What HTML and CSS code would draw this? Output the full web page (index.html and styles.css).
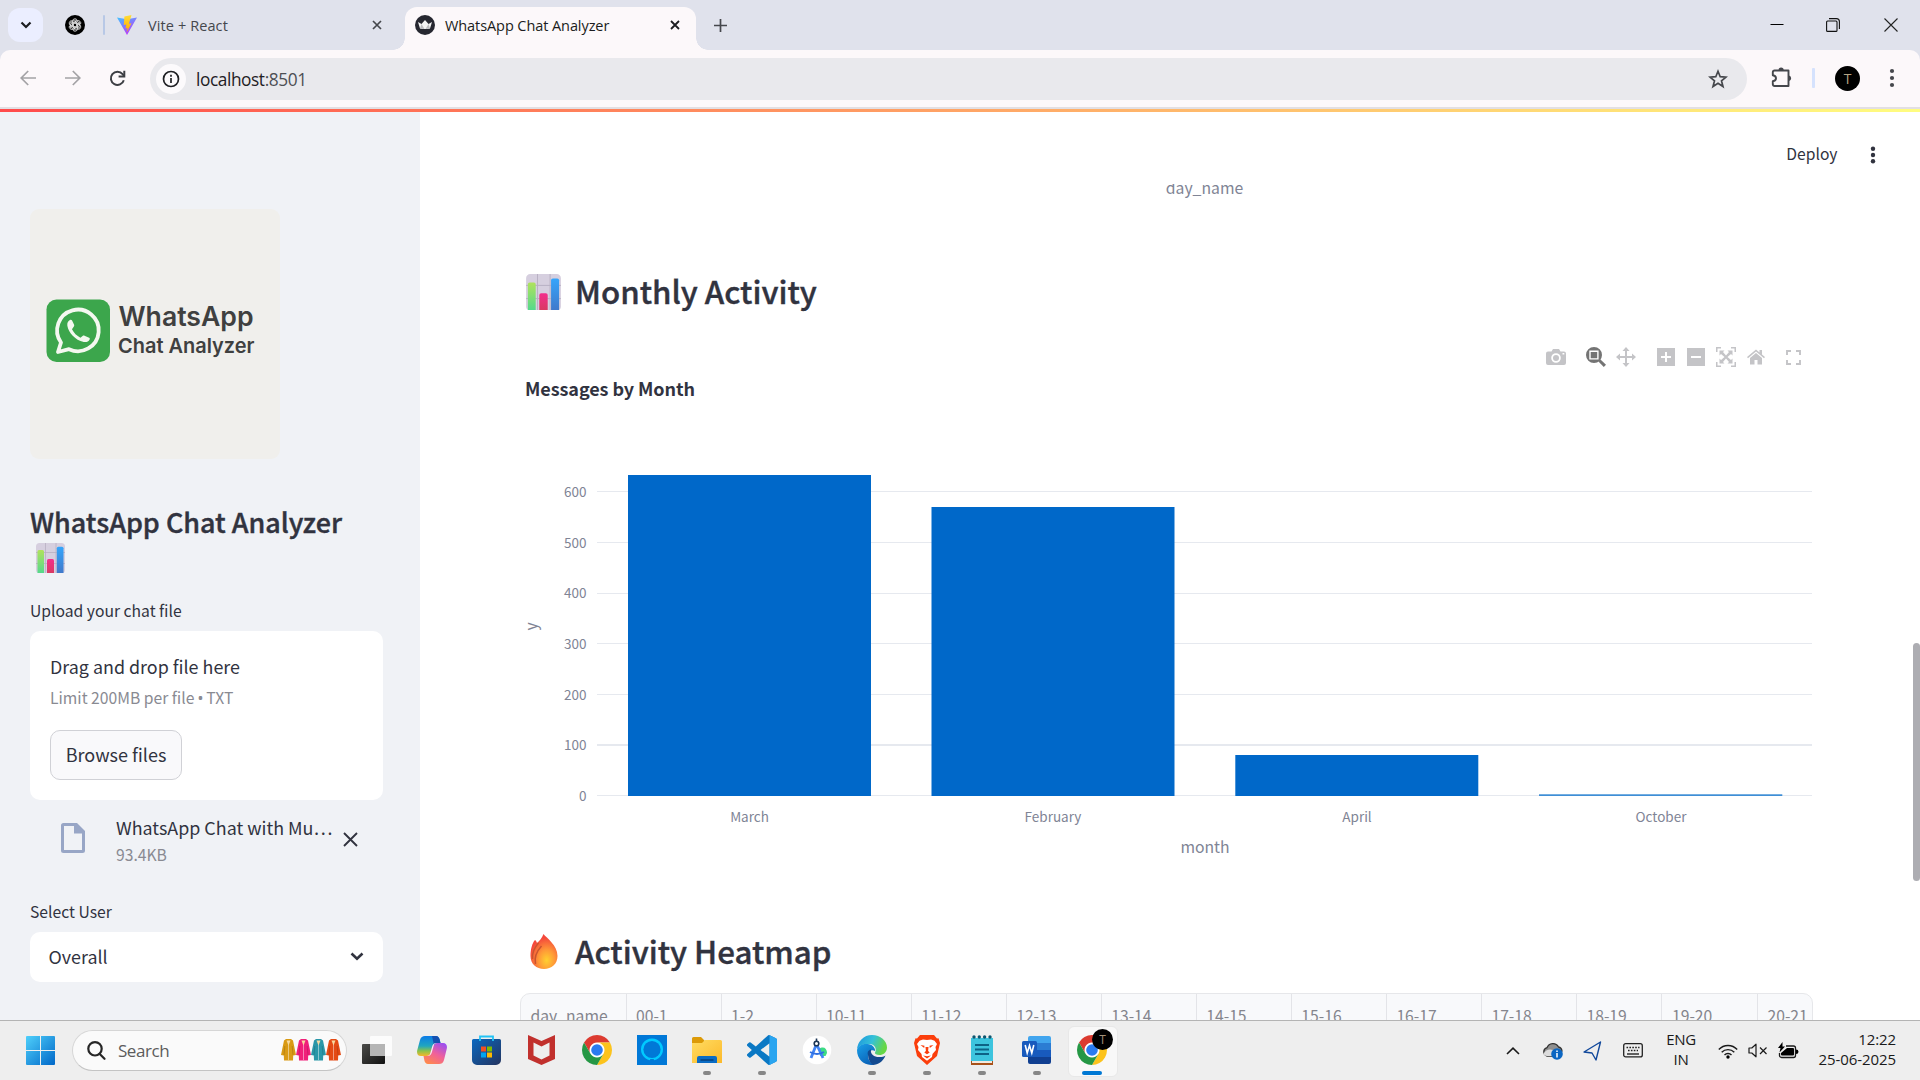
FILE: index.html
```html
<!DOCTYPE html>
<html lang="en">
<head>
<meta charset="utf-8">
<title>WhatsApp Chat Analyzer</title>
<link rel="stylesheet" href="styles.css">
</head>
<body>
<svg class="defs" width="0" height="0" aria-hidden="true">
  <defs>
    <linearGradient id="gGreen" x1="0" y1="0" x2="0" y2="1"><stop offset="0" stop-color="#b0e25c"/><stop offset="1" stop-color="#55d98c"/></linearGradient>
    <linearGradient id="gPink" x1="0" y1="0" x2="0" y2="1"><stop offset="0" stop-color="#f32f8d"/><stop offset="1" stop-color="#d93a62"/></linearGradient>
    <linearGradient id="gBlue" x1="0" y1="0" x2="0" y2="1"><stop offset="0" stop-color="#35a5fb"/><stop offset="1" stop-color="#4079cb"/></linearGradient>
    <linearGradient id="gWin" x1="0" y1="0" x2="1" y2="1"><stop offset="0" stop-color="#4fd0fb"/><stop offset="1" stop-color="#0067c8"/></linearGradient>
    <symbol id="bars" viewBox="0 0 29 30">
      <path d="M3.500 0h22a3.500 3.500 0 0 1 3.500 3.500V27a3 3 0 0 1-3 3H3a3 3 0 0 1-3-3V3.500A3.500 3.500 0 0 1 3.500 0z" fill="#d6cfdf"/>
      <path d="M9.500 0v30M20 0v30M0 9.500h29M0 20.500h29" stroke="#b7b0c2" stroke-width=".8"/>
      <path d="M1.500 30V8.500a1.500 1.500 0 0 1 1.500-1.500h3.500a1.500 1.500 0 0 1 1.500 1.500V30z" fill="url(#gGreen)"/>
      <path d="M11 30V17.500a1.500 1.500 0 0 1 1.500-1.500h4a1.500 1.500 0 0 1 1.500 1.500V30z" fill="url(#gPink)"/>
      <path d="M20.800 30V5.300a1.500 1.500 0 0 1 1.500-1.500h3.700a1.500 1.500 0 0 1 1.500 1.500V30z" fill="url(#gBlue)"/>
    </symbol>
    <symbol id="chrome" viewBox="0 0 48 48">
      <circle cx="24" cy="24" r="14" fill="#fff"/>
      <path d="M3.220 12A24 24 0 0 1 44.780 12H24A12 12 0 0 0 13.610 30z" fill="#dc3b30"/>
      <path d="M44.780 12A24 24 0 0 1 24 48L34.390 30A12 12 0 0 0 24 12z" fill="#fcc31c"/>
      <path d="M24 48A24 24 0 0 1 3.220 12L13.610 30A12 12 0 0 0 34.390 30z" fill="#259745"/>
      <circle cx="24" cy="24" r="9.300" fill="#2a7bf0"/>
    </symbol>
    <symbol id="coat" viewBox="0 0 15 22">
      <path d="M5 0h5l2 1.500L15 16l-2.800.6-.2 4.900H3l-.2-4.900L0 16 3 1.500z"/>
      <path d="M7.500 2v19" stroke="#ffffff" stroke-opacity=".45" stroke-width="1"/>
      <path d="M3.800 7l-.8 9M11.200 7l.8 9" stroke="#000" stroke-opacity=".18" stroke-width=".8"/>
      <path d="M5.500 1.500h4l-2 5z" fill="#f6d9a0"/>
    </symbol>
  </defs>
</svg>
<div class="screen">
  <header class="tabstrip">
    <div class="tab-search"><svg width="12" height="8" viewBox="0 0 12 8"><path d="M1.500 1.500L6 6l4.500-4.500" fill="none" stroke="#1b1c20" stroke-width="2.200"/></svg></div>
    <div class="pinned">
      <svg width="20" height="20" viewBox="0 0 20 20"><circle cx="10" cy="10" r="10"/><g fill="none" stroke="#e8e8e8" stroke-width=".8" stroke-linejoin="round"><path id="k" d="M7.300 11.600V6.400a2.700 2.700 0 0 1 4.900-1.500M9 12.500l4.300-2.500V6.800L9.700 4.700"/><use href="#k" transform="rotate(60 10 10)"/><use href="#k" transform="rotate(120 10 10)"/><use href="#k" transform="rotate(180 10 10)"/><use href="#k" transform="rotate(240 10 10)"/><use href="#k" transform="rotate(300 10 10)"/></g></svg>
    </div>
    <span class="tab-divider"></span>
    <div class="tab">
      <svg width="20" height="20" viewBox="0 0 20 20"><defs><linearGradient id="v1" x1="0" y1="0" x2=".6" y2="1"><stop offset="0" stop-color="#41c5ff"/><stop offset="1" stop-color="#bd34fe"/></linearGradient><linearGradient id="v2" x1="0" y1="0" x2="0" y2="1"><stop offset="0" stop-color="#ffdd35"/><stop offset="1" stop-color="#ffa800"/></linearGradient></defs><path d="M0 2.500l10 1.700 10-1.700L10 20z" fill="url(#v1)"/><path d="M14.500 0L7.400 1.400 6.800 10l2.500-.5-.8 4 2-.6-.8 4.600 4.800-9.200-2.600.5z" fill="url(#v2)"/></svg>
      <span class="tab-title vite">Vite + React</span>
      <svg class="tab-close" width="10" height="10" viewBox="0 0 10 10"><path d="M1 1l8 8M9 1L1 9" stroke="#45474c" stroke-width="1.700"/></svg>
    </div>
    <div class="tab active">
      <svg width="20" height="20" viewBox="0 0 20 20"><circle cx="10" cy="10" r="10" fill="#262730"/><path d="M3 7l3.500 2L10 5l3.500 4L17 7l-2 6.500q-5 1-10 0z" fill="#f4f4f4"/><path d="M6.500 9l3 5-4.500-.5zM13.500 9l-3 5 4.500-.5z" fill="#bdbdc0"/></svg>
      <span class="tab-title">WhatsApp Chat Analyzer</span>
      <svg class="tab-close" width="10" height="10" viewBox="0 0 10 10"><path d="M1 1l8 8M9 1L1 9" stroke="#1b1c20" stroke-width="1.800"/></svg>
    </div>
    <svg class="new-tab" width="13" height="13" viewBox="0 0 13 13"><path d="M6.500 0v13M0 6.500h13" stroke="#45474c" stroke-width="1.700"/></svg>
    <div class="win-buttons">
      <svg width="14" height="14" viewBox="0 0 14 14"><path d="M.5 6.500h13" stroke="#000" stroke-width="1"/></svg>
      <svg width="14" height="14" viewBox="0 0 14 14" fill="none" stroke="#111" stroke-width="1.100"><rect x=".6" y="3" width="10.400" height="10.400" rx="1"/><path d="M3 .6h7.400a3 3 0 0 1 3 3V11"/></svg>
      <svg width="14" height="14" viewBox="0 0 14 14"><path d="M.5 .5l13 13M13.500 .5l-13 13" stroke="#222" stroke-width="1.100"/></svg>
    </div>
  </header>

  <nav class="toolbar">
    <svg class="nav-icon" width="16" height="16" viewBox="0 0 16 16" fill="none" stroke="#a3a2a5" stroke-width="1.700"><path d="M16 8H1.500M8.200 1L1.200 8l7 7"/></svg>
    <svg class="nav-icon" width="16" height="16" viewBox="0 0 16 16" fill="none" stroke="#a3a2a5" stroke-width="1.700"><path d="M0 8h14.500M7.800 1l7 7-7 7"/></svg>
    <svg class="nav-icon" width="17" height="17" viewBox="0 0 17 17" fill="none" stroke="#3c3e43" stroke-width="2"><path d="M14.800 10.200A6.600 6.600 0 1 1 13.600 4.200L15 5.800"/><path d="M15.300 .8v5.700H9.600"/></svg>
    <div class="omnibox">
      <span class="site-info"><svg width="18" height="18" viewBox="0 0 18 18"><circle cx="9" cy="9" r="7.500" fill="none" stroke="#1f2024" stroke-width="1.700"/><path d="M9 8v5M9 4.800v1.900" stroke="#1f2024" stroke-width="1.700"/></svg></span>
      <span class="url">localhost<span class="port">:8501</span></span>
      <svg class="star" width="20" height="20" viewBox="0 0 20 20"><path d="M10 2.300l2.200 5.400 5.800.4-4.500 3.700 1.500 5.700-5-3.200-5 3.200 1.500-5.700L2 8.100l5.800-.4z" fill="none" stroke="#45474c" stroke-width="1.700"/></svg>
    </div>
    <svg class="puzzle" width="22" height="22" viewBox="0 0 22 22"><path d="M3.500 3.500h14v15.500h-14a1.700 1.700 0 0 1-1.700-1.700v-3.100q3.200-.5 3.200-3t-3.200-3V5.200a1.700 1.700 0 0 1 1.700-1.700z" fill="none" stroke="#45474c" stroke-width="1.900" stroke-linejoin="round"/><path d="M7.500 3.200a2.600 2.600 0 0 1 5.200 0zM18 8.600a2.700 2.700 0 0 1 0 5.300z" fill="#45474c"/></svg>
    <span class="bar-divider"></span>
    <span class="avatar">T</span>
    <svg class="menu" width="6" height="20" viewBox="0 0 6 20" fill="#45474c"><circle cx="3" cy="3" r="2.100"/><circle cx="3" cy="10" r="2.100"/><circle cx="3" cy="17" r="2.100"/></svg>
  </nav>

  <div class="page">
    <div class="decoration"></div>
    <aside class="sidebar">
      <svg class="logo" width="250" height="250" viewBox="30 209 250 250">
        <rect x="30" y="209" width="250" height="250" rx="9" fill="#f0efec"/>
        <rect x="46.500" y="299.500" width="63.500" height="62.500" rx="10" fill="#3ca64c"/>
        <path d="M58 352l3-9.500a20.800 20.800 0 1 1 8 6.700z" fill="none" stroke="#f4f8f0" stroke-width="3.800" stroke-linejoin="round"/>
        <path transform="translate(63.500 315.500) scale(1.280)" d="M6.620 10.790c1.440 2.830 3.760 5.140 6.590 6.590l1.700-1.400c.5-.4 1-.5 1.500-.2l3.600 1.700c.5.200.7.800.4 1.300-.9 1.700-2.600 2.300-4.600 1.900C9 19.200 4 13.500 3 8c-.3-2.200.5-3.800 2-4.500.7-.3 1.400-.1 1.700.4l1.600 3.400c.2.500.1.900-.2 1.200z" fill="#f4f8f0"/>
        <text class="logo-text" x="118.500" y="326" font-size="26.500" textLength="135" lengthAdjust="spacingAndGlyphs">WhatsApp</text>
        <text class="logo-text" x="118" y="352.500" font-size="20.500" textLength="136.500" lengthAdjust="spacingAndGlyphs">Chat Analyzer</text>
      </svg>
      <h1 class="side-title">WhatsApp Chat Analyzer</h1>
      <svg class="side-emoji" width="29" height="30"><use href="#bars"/></svg>
      <label class="side-label upload">Upload your chat file</label>
      <section class="dropzone">
        <div class="drop-main">Drag and drop file here</div>
        <div class="drop-limit">Limit 200MB per file <span class="dot">•</span> TXT</div>
        <button class="browse">Browse files</button>
      </section>
      <div class="file-row">
        <svg class="file-icon" width="24" height="30" viewBox="0 0 24 30"><path fill-rule="evenodd" d="M2.500 0H16l8 8v19.500a2.500 2.500 0 0 1-2.500 2.500h-19A2.500 2.500 0 0 1 0 27.500v-25A2.500 2.500 0 0 1 2.500 0zM3 3v24h18V10.500h-8V3z" fill="#98a6c6"/></svg>
        <div class="file-text"><div class="file-name">WhatsApp Chat with Mu…</div><div class="file-size">93.4KB</div></div>
        <svg class="file-remove" width="15" height="15" viewBox="0 0 15 15"><path d="M1 1l13 13M14 1L1 14" stroke="#31333f" stroke-width="1.900"/></svg>
      </div>
      <label class="side-label user">Select User</label>
      <div class="select"><span>Overall</span><svg width="14" height="9" viewBox="0 0 14 9"><path d="M1.500 1.500L7 6.700l5.500-5.200" fill="none" stroke="#31333f" stroke-width="2.600"/></svg></div>
    </aside>

    <main class="main">
      <div class="app-header">
        <span>Deploy</span>
        <svg width="6" height="18" viewBox="0 0 6 18" fill="#31333f"><circle cx="3" cy="2.700" r="2.200"/><circle cx="3" cy="9" r="2.200"/><circle cx="3" cy="15.300" r="2.200"/></svg>
      </div>
      <div class="content">
        <div class="prev-axis">day_name</div>
        <h2 class="heading monthly"><svg width="35" height="36"><use href="#bars"/></svg><span>Monthly Activity</span></h2>
        <div class="modebar">
          <svg class="camera" width="20" height="20" viewBox="0 0 20 20"><path fill-rule="evenodd" d="M2 4.500h3.500L7 2h6l1.500 2.500H18a2 2 0 0 1 2 2V16a2 2 0 0 1-2 2H2a2 2 0 0 1-2-2V6.500a2 2 0 0 1 2-2zM10 6.200a4.800 4.800 0 1 0 0 9.600 4.800 4.800 0 0 0 0-9.600zM16.500 6v1.500h1.800V6z"/><circle cx="10" cy="11" r="3"/></svg>
          <svg class="zoom" width="20" height="20" viewBox="0 0 20 20"><path fill-rule="evenodd" d="M8 0a8 8 0 1 1 0 16A8 8 0 0 1 8 0zM3.300 3.600v8.800h9.300V3.600z"/><path d="M4.700 5h6.500v6.200H4.700zM12.200 14.200l2-2 5.800 5.600-2.200 2.200z"/></svg>
          <svg class="pan" width="20" height="20" viewBox="0 0 20 20"><path d="M10 0l3.500 4H11v5h5V6.500l4 3.500-4 3.500V11h-5v5h2.500L10 20l-3.500-4H9v-5H4v2.500L0 10l4-3.500V9h5V4H6.500z"/></svg>
          <svg class="plus" width="20" height="20" viewBox="0 0 20 20"><path fill-rule="evenodd" d="M1 1h18v18H1zM9 5v4H5v2h4v4h2v-4h4V9h-4V5z"/></svg>
          <svg class="minus" width="20" height="20" viewBox="0 0 20 20"><path fill-rule="evenodd" d="M1 1h18v18H1zM5 9v2h10V9z"/></svg>
          <svg class="auto" width="20" height="20" viewBox="0 0 20 20"><path d="M0 0h5v1.500H1.500V5H0zM15 0h5v5h-1.500V1.500H15zM0 15h1.500v3.500H5V20H0zM18.500 15H20v5h-5v-1.500h3.500zM3.500 3.500h5L7 5l3 3.400L13 5l-1.500-1.500h5v5L15 7l-3.500 3L15 13l1.500-1.500v5h-5L13 15l-3-3.400L7 15l1.500 1.500h-5v-5L5 13l3.500-3L5 7 3.500 8.500z"/></svg>
          <svg class="home" width="20" height="20" viewBox="0 0 20 20"><path d="M1 10l9-7.500 3.500 3V3H16v4.500l3 2.500-1 1.200-8-6.700-8 6.700zM4 11l6-5 6 5v6.500h-4.500V13h-3v4.500H4z"/></svg>
          <svg class="full" width="15" height="15" viewBox="0 0 15 15" fill="none" stroke="#c4c4c7" stroke-width="1.900"><path d="M1 5V1h4M10 1h4v4M14 10v4h-4M5 14H1v-4"/></svg>
        </div>
        <svg class="chart" width="1293" height="530" viewBox="520 370 1293 530">
          <text class="chart-title" x="525" y="396" textLength="170">Messages by Month</text>
          <g fill="#e6e9ef">
            <rect x="597" y="491" width="1215" height="1"/><rect x="597" y="542" width="1215" height="1"/><rect x="597" y="593" width="1215" height="1"/><rect x="597" y="643" width="1215" height="1"/><rect x="597" y="694" width="1215" height="1"/><rect x="597" y="744" width="1215" height="2"/><rect x="597" y="795" width="1215" height="1"/>
          </g>
          <g fill="#0068c9">
            <rect x="628" y="475" width="243" height="321"/><rect x="931.500" y="507" width="243" height="289"/><rect x="1235.300" y="755" width="243" height="41"/><rect x="1539" y="794" width="243.300" height="1" fill="#74aee1"/><rect x="1539" y="795" width="243.300" height="1" fill="#3f8ed6"/>
          </g>
          <g class="tick y-tick"><text x="586.500" y="497">600</text><text x="586.500" y="548">500</text><text x="586.500" y="598">400</text><text x="586.500" y="649">300</text><text x="586.500" y="700">200</text><text x="586.500" y="750">100</text><text x="586.500" y="801">0</text></g>
          <g class="tick x-tick"><text x="749.500" y="822">March</text><text x="1053" y="822">February</text><text x="1357" y="822">April</text><text x="1661" y="822">October</text></g>
          <text class="axis" x="1205" y="853">month</text>
          <text class="axis" transform="translate(537 626.500) rotate(-90)">y</text>
        </svg>
        <h2 class="heading heat"><svg width="28" height="35" viewBox="0 0 28 35"><defs><radialGradient id="fl" cx=".6" cy=".75" r=".65"><stop offset="0" stop-color="#ffd02f"/><stop offset=".45" stop-color="#ff9a37"/><stop offset="1" stop-color="#f4483c"/></radialGradient></defs><path d="M13.500 0c3 4 14 11 14 22 0 8-6 13-13.500 13S.5 30 .5 22c0-6 1.500-13 4.500-16 1 .5 1.500 1.500 2 3C9.500 7 12 4 13.500 0z" fill="url(#fl)"/><path d="M8.500 9C4 14 2 19 2.500 25M11.500 12C6 18 4 23 5.500 30" fill="none" stroke="#c9542f" stroke-width="1.500"/></svg><span>Activity Heatmap</span></h2>
        <div class="table">
          <span class="first">day_name</span><span>00-1</span><span>1-2</span><span>10-11</span><span>11-12</span><span>12-13</span><span>13-14</span><span>14-15</span><span>15-16</span><span>16-17</span><span>17-18</span><span>18-19</span><span>19-20</span><span>20-21</span>
        </div>
      </div>
      <div class="scroll-thumb"></div>
    </main>
  </div>

  <footer class="taskbar">
    <svg class="start" width="29" height="29" viewBox="0 0 29 29" fill="url(#gWin)"><path d="M0 1a1 1 0 0 1 1-1h13v14H0zM15 0h13a1 1 0 0 1 1 1v13H15zM0 15h14v14H1a1 1 0 0 1-1-1zM15 15h14v13a1 1 0 0 1-1 1H15z"/></svg>
    <div class="search">
      <svg width="19" height="19" viewBox="0 0 19 19" fill="none" stroke="#262626" stroke-width="2.200"><circle cx="8" cy="7.800" r="6.700"/><path d="M12.500 12.800l5 5" stroke-linecap="round"/></svg>
      <span>Search</span>
      <div class="coats"><svg width="15" height="22" fill="#d99a14"><use href="#coat"/></svg><svg width="15" height="22" fill="#f0207a"><use href="#coat"/></svg><svg width="15" height="22" fill="#2a97a8"><use href="#coat"/></svg><svg width="15" height="22" fill="#e44a14"><use href="#coat"/></svg></div>
    </div>
    <div class="apps">
      <div class="app"><svg width="30" height="28" viewBox="0 0 30 28"><defs><linearGradient id="tk" x1="0" y1="0" x2="1" y2="1"><stop offset="0" stop-color="#4a4a48"/><stop offset="1" stop-color="#111"/></linearGradient></defs><path d="M0 9a1 1 0 0 1 1-1h22v19a1 1 0 0 1-1 1H1a1 1 0 0 1-1-1z" fill="url(#tk)"/><rect x="8" y="0" width="22" height="20" rx="1" fill="#fff" opacity=".82"/><path d="M8 8h15v12H9a1 1 0 0 1-1-1z" fill="#b5b5b5"/></svg></div>
      <div class="app"><svg width="30" height="28" viewBox="0 0 30 28"><defs><linearGradient id="c1" x1="0" y1="0" x2="0" y2="1"><stop offset="0" stop-color="#0b7be8"/><stop offset=".5" stop-color="#20a6c0"/><stop offset=".75" stop-color="#8bc34a"/><stop offset="1" stop-color="#f6b62a"/></linearGradient><linearGradient id="c2" x1=".8" y1="0" x2=".2" y2="1"><stop offset="0" stop-color="#9b4ff0"/><stop offset=".5" stop-color="#f0609a"/><stop offset="1" stop-color="#ff8a4a"/></linearGradient></defs><path d="M8 0h11c2 0 3 1.500 3.500 3l1 4h-3c-2.500 0-3.500 1.500-4 3.500l-1.700 6c-.8 2.200-1.800 3.500-4 3.500H4c-3.500 0-4.500-3-3.700-6L3 4c1-3 2.500-4 5-4z" fill="url(#c1)"/><path d="M22 28H11c-2 0-3-1.500-3.500-3l-1-5h3c2.500 0 3.500-1.500 4-3.500l1.700-6C16 8.300 17 7 19.200 7H26c3.500 0 4.500 3 3.700 6L27 24c-1 3-2.500 4-5 4z" fill="url(#c2)"/><path d="M15 0h4c2 0 3 1.500 3.500 3l1 4H20q-2 0-3 2.300z" fill="#1450b0"/><path d="M13.500 16.500l1.700-6C16 8.300 17 7 19.200 7h1.300c-2.500 0-3.500 1.500-4 3.500l-1.700 6c-.8 2.200-1.800 3.500-4 3.500H9.500c2.500 0 3.500-1.500 4-3.500z" fill="#f4eef4"/></svg></div>
      <div class="app"><svg width="29" height="30" viewBox="0 0 29 30"><defs><linearGradient id="st" x1="0" y1="0" x2="1" y2="1"><stop offset="0" stop-color="#0a68c0"/><stop offset="1" stop-color="#24345f"/></linearGradient></defs><path d="M8 6V1.500h13V6" fill="none" stroke="#22c3f5" stroke-width="1.800"/><path d="M0 5.500A1.500 1.500 0 0 1 1.500 4h26A1.500 1.500 0 0 1 29 5.500V25a5 5 0 0 1-5 5H5a5 5 0 0 1-5-5z" fill="url(#st)"/><path d="M8 6V4M21 6V4" stroke="#22c3f5" stroke-width="1.800"/><path d="M9 11.500h5v5H9z" fill="#f25022"/><path d="M15 11.500h5v5h-5z" fill="#7fba00"/><path d="M9 17.500h5v5H9z" fill="#00a4ef"/><path d="M15 17.500h5v5h-5z" fill="#ffb900"/></svg></div>
      <div class="app"><svg width="27" height="30" viewBox="0 0 27 30"><path fill-rule="evenodd" d="M0 0l13.500 6L27 0v24l-13.500 6L0 24zM5.500 7.500v13l8 4 8-4v-13l-8 4z" fill="#c1302d"/></svg></div>
      <div class="app"><svg width="30" height="30"><use href="#chrome"/></svg></div>
      <div class="app"><svg width="30" height="30" viewBox="0 0 30 30"><path d="M0 0h30v30H0z" fill="#0078d7"/><path d="M13 25.200a11 11 0 1 1 4 0v-.9a10.500 10.500 0 0 0-4 0z" fill="#00caff"/><circle cx="15" cy="14.500" r="8.600" fill="#0078d7"/></svg></div>
      <div class="app run"><svg width="30" height="30" viewBox="0 0 30 30"><defs><linearGradient id="fo" x1="0" y1="0" x2="1" y2="1"><stop offset="0" stop-color="#ffdc62"/><stop offset="1" stop-color="#fcb92a"/></linearGradient></defs><path d="M0 3.500A1.500 1.500 0 0 1 1.500 2H9l3.500 3.500v6H0z" fill="#dc9a08"/><path d="M0 8h10l3-3h15.500A1.500 1.500 0 0 1 30 6.500V28H0z" fill="url(#fo)"/><path d="M5 28v-5a2 2 0 0 1 2-2h16a2 2 0 0 1 2 2v5z" fill="#0b6cc4"/><path d="M8.500 25h13" stroke="#07407c" stroke-width="1.500"/></svg></div>
      <div class="app run"><svg width="30" height="30" viewBox="0 0 24 24"><path fill="#0a78c4" d="M23.150 2.587L18.210.21a1.494 1.494 0 0 0-1.705.29l-9.460 8.630-4.120-3.128a.999.999 0 0 0-1.276.057L.327 7.261A1 1 0 0 0 .326 8.740L3.899 12 .326 15.260a1 1 0 0 0 .001 1.479L1.650 17.940a.999.999 0 0 0 1.276.057l4.120-3.128 9.460 8.630a1.492 1.492 0 0 0 1.704.290l4.942-2.377A1.500 1.500 0 0 0 24 20.060V3.939a1.500 1.500 0 0 0-.85-1.352zm-5.146 14.861L10.826 12l7.178-5.448v10.896z"/><path d="M18 .1l5.150 2.487A1.500 1.500 0 0 1 24 3.939V20.060a1.500 1.500 0 0 1-.85 1.352L18 23.900z" fill="#2aa5f0"/></svg></div>
      <div class="app"><svg width="30" height="30" viewBox="0 0 30 30"><circle cx="15" cy="15" r="14.300" fill="#fff"/><path d="M17 14c4-3 8-1 8 4l-1.500 3H18z" fill="#3ddc84"/><path d="M14.500 9L9 23M14.500 9L21 23" stroke="#4285f4" stroke-width="2.800"/><path d="M8 17q7 4 14 0" fill="none" stroke="#2f6fe0" stroke-width="1.800"/><circle cx="14.500" cy="8.500" r="2.300" fill="#fff" stroke="#1c3554" stroke-width="1.600"/><path d="M14.500 3.500v3" stroke="#1c3554" stroke-width="1.600"/></svg></div>
      <div class="app run"><svg width="30" height="30" viewBox="0 0 30 30"><defs><linearGradient id="e1" x1="0" y1="0" x2="1" y2=".3"><stop offset="0" stop-color="#1b93de"/><stop offset=".55" stop-color="#35c1d8"/><stop offset="1" stop-color="#66d746"/></linearGradient><linearGradient id="e2" x1="0" y1="0" x2=".6" y2="1"><stop offset="0" stop-color="#1aa0e8"/><stop offset="1" stop-color="#0a62b8"/></linearGradient></defs><path d="M0 15A15 15 0 0 1 15 0c8.500 0 15 6 15 12.500 0 5-4 7.500-7.500 7.500-3 0-5-1-4.500-2.500C20 14 18 9 12 9 6 9 1 11 0 15z" fill="url(#e1)"/><path d="M0 15C1 11 5 8.500 10.500 9c5 .3 8 4 7.500 7-3-2-7 0-7 5 0 4 3 7 6 8.900C8 31 0 25 0 15z" fill="url(#e2)"/><path d="M11 20c-1-3 .5-5 3-5.500-1 5 4 8 9 7.500 2 0 4-.5 5.500-1.500C26 26.500 21 30 16 30c-3-2-5-6-5-10z" fill="#124a90"/></svg></div>
      <div class="app run"><svg width="26" height="30" viewBox="0 0 26 30"><path d="M6 0h14l3 3.500 1.500-.3L26 8l-3 13-10 9L3 21 0 8l1.500-4.800 1.500.3z" fill="#fb3e0c"/><path d="M9 4.500l4 .6 4-.6 3.500 1.300L23 9l-1.500 3 .5 3-3.500 4-.5 3-5 3.800L8 22l-.5-3L4 15l.5-3L3 9l2.500-3.200z" fill="#fff"/><path d="M6.500 10l4 .8-.3 2.200zM19.500 10l-4 .8.300 2.200zM11.500 12h3l-.4 4 1.600 1.500L13 19.300l-2.700-1.800 1.600-1.500zM9 20.500l4 .8 4-.8-4 3z" fill="#fb3e0c"/></svg></div>
      <div class="app run"><svg width="22" height="30" viewBox="0 0 22 30"><path d="M0 3h22v23H0z" fill="#3dc4de"/><path d="M0 26h22v4H0z" fill="#a8521a"/><path d="M1 26h20v2H1z" fill="#f3e9df"/><path d="M4 10h14M4 14.500h14M4 19h14" stroke="#0d6286" stroke-width="1.800"/><g fill="#0d5670"><circle cx="3" cy="2" r="1.700"/><circle cx="8.300" cy="2" r="1.700"/><circle cx="13.600" cy="2" r="1.700"/><circle cx="19" cy="2" r="1.700"/></g></svg></div>
      <div class="app run"><svg width="29" height="28" viewBox="0 0 29 28"><path d="M6 2a2 2 0 0 1 2-2h19a2 2 0 0 1 2 2v5.500H6z" fill="#41a5ee"/><path d="M6 7h23v7H6z" fill="#2b7cd3"/><path d="M6 14h23v7H6z" fill="#185abd"/><path d="M6 21h23v5a2 2 0 0 1-2 2H8a2 2 0 0 1-2-2z" fill="#103f91"/><rect y="5" width="15" height="16" rx="1.500" fill="#185abd"/><path d="M3.200 9l2 8 2.300-7.500L9.800 17l2-8" fill="none" stroke="#fff" stroke-width="1.600"/></svg></div>
      <div class="app run current"><svg width="30" height="30"><use href="#chrome"/></svg><span class="badge">T</span></div>
    </div>
    <div class="tray">
      <svg class="t-up" width="14" height="8" viewBox="0 0 14 8"><path d="M1 7l6-5.800L13 7" fill="none" stroke="#1a1a1a" stroke-width="1.600"/></svg>
      <svg class="t-cloud" width="21" height="18" viewBox="0 0 21 18"><path d="M5 14a4.300 4.300 0 0 1 0-8.300A6.300 6.300 0 0 1 16.500 5q3 .5 3.500 4l-5 5z" fill="#8f8f8f" stroke="#333" stroke-width="1.300"/><path d="M1.500 11.500Q5 6 11 8l3 3-3 3H5q-3 0-3.500-2.500z" fill="#dcdcdc"/><circle cx="15" cy="12" r="5.800" fill="#0b66c2"/><path d="M15 11v4.500M15 8.500v1.400" stroke="#fff" stroke-width="1.500"/></svg>
      <svg class="t-loc" width="19" height="20" viewBox="0 0 19 20"><path d="M17.500 1L1 11l8 1 4 7z" fill="none" stroke="#11489b" stroke-width="1.400" stroke-linejoin="round"/></svg>
      <svg class="t-kbd" width="20" height="15" viewBox="0 0 20 15"><rect x=".7" y=".7" width="18.600" height="13.200" rx="2" fill="none" stroke="#222" stroke-width="1.300"/><path d="M3.500 4.500h13M5 7.500h10" stroke="#222" stroke-width="1.400" stroke-dasharray="1.600 1.300"/><path d="M4 11h12" stroke="#222" stroke-width="1.400"/></svg>
      <div class="t-lang">ENG<br>IN</div>
      <svg class="t-wifi" width="20" height="16" viewBox="0 0 20 16"><g fill="none" stroke="#1a1a1a" stroke-width="1.400"><path d="M.8 6.500a12.500 12.500 0 0 1 18.400 0M3.700 9.300a8.700 8.700 0 0 1 12.600 0M6.500 12a4.900 4.900 0 0 1 7 0"/></g><circle cx="10" cy="14" r="1.700"/></svg>
      <svg class="t-vol" width="20" height="15" viewBox="0 0 20 15"><path d="M1 5h2.800L8 1.200v12.600L3.800 10H1z" fill="none" stroke="#1a1a1a" stroke-width="1.200" stroke-linejoin="round"/><path d="M12 4.500l6.500 6.500M18.500 4.500L12 11" stroke="#1a1a1a" stroke-width="1.200"/></svg>
      <svg class="t-bat" width="21" height="17" viewBox="0 0 21 17"><path d="M8 4h7.500a2 2 0 0 1 2 2v7.500a2 2 0 0 1-2 2h-12a2 2 0 0 1-2-2V11" fill="none" stroke="#1a1a1a" stroke-width="1.300"/><path d="M9 6h6a1 1 0 0 1 1 1v5.500a1 1 0 0 1-1 1H4a1 1 0 0 1-1-1V11zM18 7.500q2.500 0 2.500 2.200T18 12zM4.500 0L0 6h2.500L1.500 10.500 7 4.500H4.500z"/></svg>
      <div class="t-clock">12:22<br>25-06-2025</div>
    </div>
  </footer>
</div>
</body>
</html>
```
FILE: styles.css
```css
* { box-sizing: border-box; }
body { margin: 0; background: #fff; }
svg { display: block; flex: none; }
.defs { position: absolute; }
.screen {
  width: 1920px; height: 1080px; overflow: hidden;
  display: flex; flex-direction: column; background: #e0e2ec;
  font-family: "Noto Sans CJK SC", "Noto Sans", sans-serif;
  color: #31333f;
}
h1, h2 { margin: 0; font-weight: 500; -webkit-text-stroke: .4px #31333f; }

/* browser tab strip */
.tabstrip {
  height: 50px; flex: none; display: flex; align-items: center;
  padding-left: 8px;
  font-family: "Open Sans", "Noto Sans", sans-serif;
}
.tab-search {
  width: 35px; height: 34px; border-radius: 12px; background: #ebeeff;
  display: flex; align-items: center; justify-content: center;
}
.pinned { margin-left: 22px; }
.tab-divider { width: 2px; height: 20px; margin-left: 18px; background: #b8c8e6; border-radius: 1px; }
.tab { width: 300px; height: 43px; padding-left: 12px; display: flex; align-items: center; }
.tab-title { margin-left: 10px; padding-top: 2px; font-size: 14.500px; line-height: 20px; color: #45474c; letter-spacing: -.08px; white-space: nowrap; }
.vite { margin-left: 11px; letter-spacing: .1px; }
.tab-close { margin-left: auto; margin-right: 23px; }
.tab.active {
  position: relative; width: 291px; padding-left: 10px; margin-top: 7px;
  padding-bottom: 7px; background: #fcf8fa; border-radius: 12px 12px 0 0;
}
.tab.active .tab-title { color: #1b1c20; }
.tab.active .tab-close { margin-right: 16px; }
.tab.active::before, .tab.active::after { content: ""; position: absolute; bottom: 0; width: 12px; height: 12px; }
.tab.active::before { left: -12px; background: radial-gradient(circle at 0 0, transparent 11.500px, #fcf8fa 12px); }
.tab.active::after { right: -12px; background: radial-gradient(circle at 100% 0, transparent 11.500px, #fcf8fa 12px); }
.new-tab { margin-left: 18px; }
.win-buttons { margin-left: auto; margin-right: 22px; display: flex; gap: 43px; }
.win-buttons svg:nth-child(2) { margin-left: -1px; margin-right: 1px; }

/* browser toolbar */
.toolbar {
  height: 59px; flex: none; display: flex; align-items: center;
  padding: 0 25px 2px 20px; background: #fcf8fa; border-bottom: 2px solid #e2dfe3;
  border-radius: 10px 10px 0 0;
  font-family: "Open Sans", "Noto Sans", sans-serif;
}
.nav-icon { margin-right: 29px; margin-top: 1px; }
.nav-icon:nth-child(2) { margin-right: 28px; }
.nav-icon:nth-child(3) { margin-right: 24px; }
.omnibox {
  width: 1597px; height: 42px; border-radius: 21px; background: #e9e9ed; margin-top: 2px;
  display: flex; align-items: center; padding-left: 6px; padding-right: 19px;
}
.site-info { width: 30px; height: 30px; border-radius: 50%; background: #fcfafc; display: flex; align-items: center; justify-content: center; }
.url { margin-left: 10px; padding-top: 2px; font-size: 17.300px; letter-spacing: -.42px; line-height: 24px; color: #1f2024; }
.port { color: #4d4f54; }
.star { margin-left: auto; }
.puzzle { margin-left: 24px; margin-top: 1px; }
.bar-divider { width: 3px; height: 20px; margin-left: 19px; background: #d5e2fd; border-radius: 1px; }
.avatar { width: 25px; height: 25px; margin-left: 20px; margin-top: 1px; border-radius: 50%; background: #000; color: #b3a284; font-size: 14px; line-height: 25px; text-align: center; }
.menu { margin-left: auto; margin-top: 1px; }

/* page */
.page { position: relative; flex: none; height: 911px; display: flex; background: #fff; overflow: hidden; }
.decoration { position: absolute; left: 0; top: 0; width: 100%; height: 3px; background: linear-gradient(90deg, #ff4b4b, #fffd80); }
.sidebar { width: 420px; flex: none; padding: 100px 37px 0 30px; background: #f0f2f6; display: flex; flex-direction: column; }
.logo-text { font-family: Inter, sans-serif; font-weight: 600; fill: #3f4040; }
.side-title { margin-top: 45px; font-size: 26.950px; line-height: 36px; white-space: nowrap; }
.side-emoji { margin: 3px 0 0 6px; }
.side-label { font-size: 15.700px; line-height: 26px; }
.upload { margin-top: 25px; }
.dropzone { height: 169px; margin-top: 7px; padding: 20px; border-radius: 10px; background: #fff; display: flex; flex-direction: column; align-items: flex-start; }
.drop-main { font-size: 17.900px; line-height: 30px; }
.drop-limit, .file-size { font-size: 15.700px; line-height: 26px; color: #898a92; }
.drop-limit { margin-top: 4px; }
.dot { font-family: "Noto Sans", sans-serif; margin: 0 -.5px; }
.browse { width: 132px; height: 50px; margin-top: 19px; padding: 0 0 2px; border: 1px solid #d0d1d6; border-radius: 10px; background: #f9f9fb; font: 18px/44px "Noto Sans CJK SC", sans-serif; color: #31333f; white-space: nowrap; }
.file-row { display: flex; margin-top: 13px; height: 54px; padding-left: 31px; }
.file-icon { margin-top: 10px; }
.file-text { margin-left: 31px; width: 219px; }
.file-name { font-size: 17.900px; line-height: 29px; white-space: nowrap; }
.file-remove { margin: 19px 0 0 8px; }
.user { margin-top: 32px; }
.select { height: 50px; margin-top: 7px; padding: 0 19px 2px 18.500px; border-radius: 10px; background: #fff; display: flex; align-items: center; justify-content: space-between; font-size: 17.900px; }

.main { position: relative; flex: 1; display: flex; flex-direction: column; }
.app-header { height: 75px; flex: none; padding: 16px 44.500px 0 0; display: flex; align-items: center; justify-content: flex-end; gap: 32px; font-size: 15.650px; }
.app-header span { line-height: 22px; padding-bottom: 2px; }
.content { height: 836px; overflow: hidden; padding-left: 100px; width: 1393px; }
.prev-axis { margin-top: -8px; text-align: center; padding-left: 76px; font-size: 15.750px; line-height: 24px; color: #808495; }
.heading { display: flex; align-items: center; height: 42px; font-size: 31.250px; line-height: 42px; white-space: nowrap; }
.heading span { padding-top: 2px; }
.monthly { margin-top: 69px; padding-left: 6px; gap: 14px; }
.monthly svg { margin-top: 3px; }
.heat { margin-top: 29px; padding-left: 10px; gap: 17px; }
.heat svg { margin-top: 2px; }
.modebar { height: 20px; margin-top: 36px; display: flex; align-items: center; justify-content: flex-end; gap: 10px; padding-right: 12px; fill: #c4c4c7; }
.zoom { margin-left: 10px; fill: #747474; }
.plus { margin-left: 10px; }
.full { margin-left: 10px; margin-top: 1px; }
.chart { margin-top: 3px; overflow: visible; }
.chart-title { font-size: 18px; font-weight: 700; fill: #31333f; }
.tick { font-size: 13.500px; fill: #808495; }
.y-tick { text-anchor: end; }
.x-tick { text-anchor: middle; }
.axis { font-size: 15.750px; fill: #808495; text-anchor: middle; }
.table {
  margin-top: 22px; height: 44px; width: 1292.500px; display: grid;
  grid-template-columns: 105.500px repeat(10, 95.050px) 85.500px 95.500px 1fr;
  border: 1px solid #e6e7ea; border-radius: 10px 10px 0 0; background: #f8f9fb; overflow: hidden;
  font-size: 15.700px; line-height: 24px; color: #84858d;
}
.table span { padding: 10px 0 0 9.500px; border-right: 1px solid #e3e4e8; white-space: nowrap; }
.table span:last-child { border-right: 0; }
.scroll-thumb { position: absolute; right: 0; top: 534px; width: 7px; height: 238px; border-radius: 4px; background: #adadb2; }

/* taskbar */
.taskbar {
  height: 60px; flex: none; display: flex; align-items: center; background: #eee; border-top: 1px solid #b4b4b4;
  padding-left: 26px; font-family: "Open Sans", "Noto Sans", sans-serif; color: #1a1a1a;
}
.search { width: 275px; height: 41px; margin-left: 17px; margin-bottom: 1px; padding: 0 5px 0 14px; border-radius: 21px; background: #fafafa; border: 1px solid #d6d6d6; border-bottom-color: #c4c4c4; display: flex; align-items: center; font-size: 17px; color: #5c5c5c; }
.search span { margin-left: 12px; letter-spacing: -.45px; }
.coats { margin-left: auto; display: flex; }
.apps { display: flex; margin-left: 2px; }
.app { position: relative; width: 55px; height: 59px; display: flex; align-items: center; justify-content: center; padding-bottom: 1px; }
.run::after { content: ""; position: absolute; left: 23.500px; bottom: 5px; width: 8px; height: 4px; border-radius: 2px; background: #868686; }
.current::before { content: ""; position: absolute; left: 3.500px; top: 5px; width: 48px; height: 49px; border-radius: 6px; background: #f8f8f8; border: 1px solid #e8e8e8; }
.current svg { position: relative; }
.current::after { left: 17.500px; width: 20px; background: #0078d4; }
.badge { position: absolute; left: 28px; top: 8px; width: 21px; height: 21px; border-radius: 50%; background: #000; color: #a08f78; font-size: 12px; line-height: 21px; text-align: center; }
.tray { margin-left: auto; margin-right: 24px; display: flex; align-items: center; font-size: 15px; line-height: 20px; letter-spacing: -.3px; }
.t-up { margin-right: 1px; }
.t-cloud { margin-left: 21px; }
.t-loc { margin-left: 20px; }
.t-kbd { margin-left: 21px; }
.t-lang { margin-left: 23px; width: 30px; text-align: center; padding-bottom: 3px; }
.t-wifi { margin-left: 22px; }
.t-vol { margin-left: 10px; }
.t-bat { margin-left: 10px; }
.t-clock { margin-left: 17px; width: 80px; text-align: right; white-space: nowrap; letter-spacing: -.08px; padding-bottom: 4px; }
```
